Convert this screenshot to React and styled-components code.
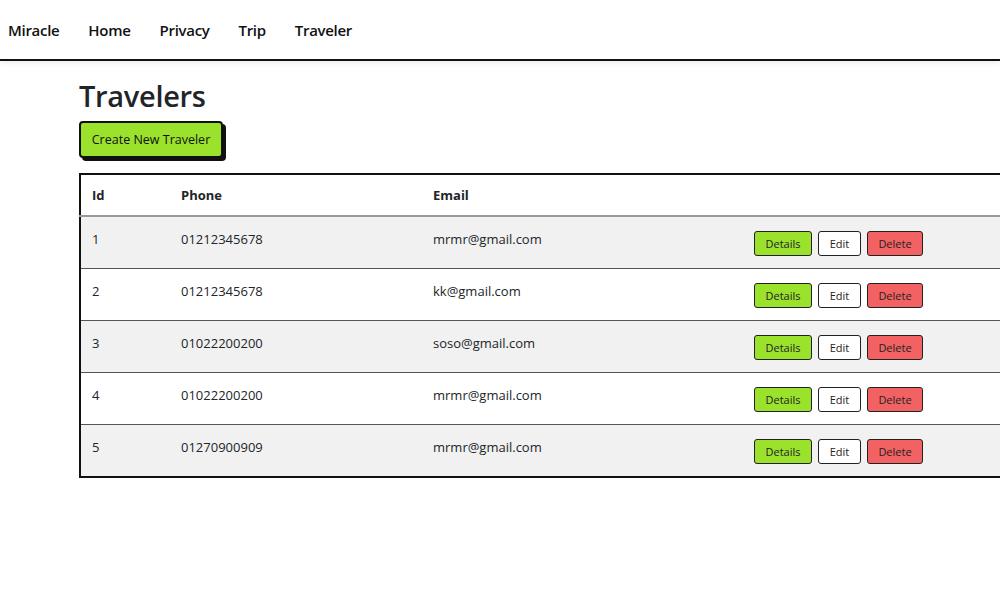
import React from 'react';
import styled, {createGlobalStyle} from 'styled-components';

const GlobalStyle = createGlobalStyle`
    body {
        margin: 0;
        font-family: "Open Sans", "Noto Sans", sans-serif;
        color: #212529;
        background: #fff;
        overflow: hidden;
    }
`;

const NavBar = styled.nav`
    display: flex;
    align-items: center;
    height: 59px;
    padding-left: 8px;
    border-bottom: 2px solid #111;
    box-shadow: 0 2px 6px rgba(0, 0, 0, 0.08);
`;

const NavLink = styled.a`
    font-size: 15px;
    font-weight: 600;
    color: #111;
    text-decoration: none;
    margin-right: 29px;
    letter-spacing: -0.3px;
`;

const Main = styled.main`
    padding: 14px 0 0 79px;
`;

const Title = styled.h1`
    margin: 0;
    font-size: 29px;
    font-weight: 600;
    line-height: 42px;
    letter-spacing: -0.3px;
`;

const CreateButton = styled.button`
    margin-top: 4px;
    width: 144px;
    height: 37px;
    background: #9be22d;
    border: 2px solid #111;
    border-radius: 4px;
    box-shadow: 3px 3px 0 #111;
    font-family: inherit;
    font-size: 12.5px;
    color: #111;
    cursor: pointer;
`;

const Table = styled.table`
    margin-top: 15px;
    width: 960px;
    border-collapse: collapse;
    border: 2px solid #111;
    font-size: 13px;
`;

const HeadCell = styled.th`
    text-align: left;
    font-weight: 700;
    height: 40px;
    padding: 0 11px;
    border-bottom: 2px solid #999;
    width: ${p => (p.$w ? `${p.$w}px` : 'auto')};
`;

const Row = styled.tr`
    background: ${p => (p.$striped ? '#f1f1f1' : '#fff')};
    border-bottom: 1px solid #555;
`;

const Cell = styled.td`
    vertical-align: top;
    padding: 13px 11px 0;
    height: 38px;
`;

const Actions = styled.div`
    display: flex;
    gap: 6px;
    margin-top: 1px;
`;

const ActionButton = styled.button`
    height: 25px;
    width: ${p => p.$w}px;
    padding: 0;
    border: 1.5px solid #222;
    border-radius: 3px;
    background: ${p => p.$bg};
    font-family: inherit;
    font-size: 11px;
    color: #222;
    cursor: pointer;
`;

const travelers = [
    {id: 1, phone: '01212345678', email: 'mrmr@gmail.com'},
    {id: 2, phone: '01212345678', email: 'kk@gmail.com'},
    {id: 3, phone: '01022200200', email: 'soso@gmail.com'},
    {id: 4, phone: '01022200200', email: 'mrmr@gmail.com'},
    {id: 5, phone: '01270900909', email: 'mrmr@gmail.com'},
];

export default function App() {
    return (
        <>
            <GlobalStyle/>
            <NavBar>
                {['Miracle', 'Home', 'Privacy', 'Trip', 'Traveler'].map(l => (
                    <NavLink key={l} href="#">{l}</NavLink>
                ))}
            </NavBar>
            <Main>
                <Title>Travelers</Title>
                <CreateButton>Create New Traveler</CreateButton>
                <Table>
                    <thead>
                        <tr>
                            <HeadCell $w={67}>Id</HeadCell>
                            <HeadCell $w={230}>Phone</HeadCell>
                            <HeadCell $w={299}>Email</HeadCell>
                            <HeadCell/>
                        </tr>
                    </thead>
                    <tbody>
                        {travelers.map((t, i) => (
                            <Row key={t.id} $striped={i % 2 === 0}>
                                <Cell>{t.id}</Cell>
                                <Cell>{t.phone}</Cell>
                                <Cell>{t.email}</Cell>
                                <Cell>
                                    <Actions>
                                        <ActionButton $w={58} $bg="#9be22d">Details</ActionButton>
                                        <ActionButton $w={43} $bg="#fff">Edit</ActionButton>
                                        <ActionButton $w={56} $bg="#f26263">Delete</ActionButton>
                                    </Actions>
                                </Cell>
                            </Row>
                        ))}
                    </tbody>
                </Table>
            </Main>
        </>
    );
}
